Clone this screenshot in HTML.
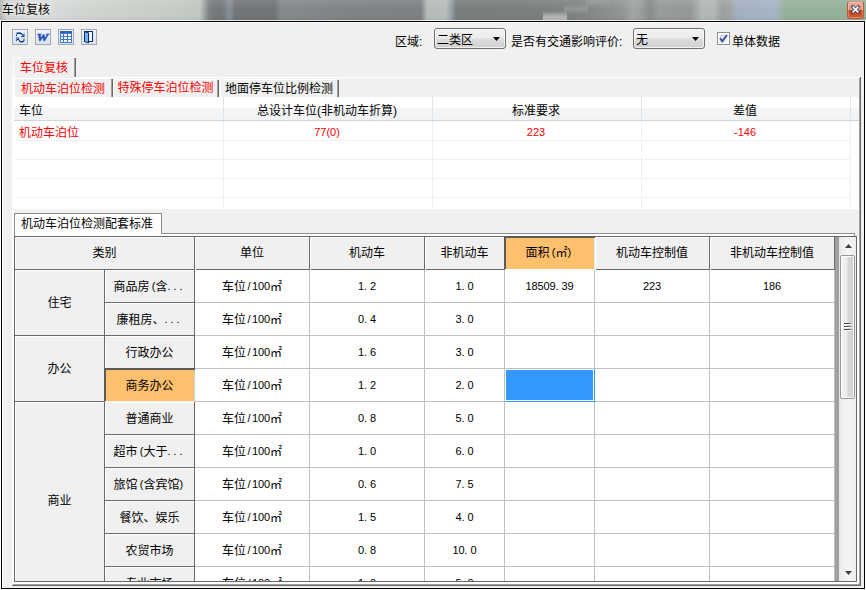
<!DOCTYPE html>
<html lang="zh-CN"><head><meta charset="utf-8"><title>车位复核</title>
<style>
html,body{margin:0;padding:0}
body{width:866px;height:590px;overflow:hidden;position:relative;background:#f0f0f0;
 font-family:"Liberation Sans","Noto Sans CJK SC",sans-serif;font-size:12px;color:#000}
body div{position:absolute;box-sizing:border-box}
body svg{position:absolute;overflow:visible}
.t{white-space:nowrap;overflow:hidden}
.c{text-align:center}
.r{color:#ff0000}
.m{font-family:"Liberation Sans","Noto Sans CJK SC",sans-serif;font-size:11px;letter-spacing:-.12px;position:relative;top:-1px}
.m i{display:inline-block;width:6px;font-style:normal;letter-spacing:0;text-align:left}
.m i.rt{text-align:right}
.m i.ct{text-align:center}
.n{font-size:11px}
</style></head><body>

<div style="left:0;top:0;width:866px;height:21px;background:
linear-gradient(to bottom,rgba(255,255,255,.10) 0,rgba(255,255,255,0) 9px,rgba(0,0,0,0) 15px,rgba(0,0,0,.04) 19px),
linear-gradient(to right,#b4b6b4 0,#d2d4d2 7px,#dcdedc 40px,#d3d7d3 75px,#c9cec9 150px,#c1c8c2 200px,#7e8284 209px,#747879 214px,#74787a 222px,#8a9098 230px,#727678 235px,#717577 275px,#858a8c 281px,#808486 340px,#7e8183 421px,#b6bcb8 427px,#b8beba 446px,#98a2ac 451px,#7a7d7e 456px,#7c7f80 535px,#808384 575px,#8c908e 610px,#9a9e9c 640px,#949896 690px,#b2b8b4 702px,#b2b8b4 714px,#9ca09e 722px,#9ea4a4 730px,#a4b1c3 737px,#a6b4c6 776px,#97b29b 784px,#96b19a 866px)"></div>
<div style="left:0px;top:20px;width:866px;height:1px;background:rgba(255,255,255,.82);"></div>
<div style="left:543px;top:11px;width:24px;height:9px;background:linear-gradient(to bottom,rgba(176,180,176,0),rgba(182,186,182,.9) 60%);"></div>
<div style="left:564px;top:4px;width:24px;height:10px;background:linear-gradient(to bottom,rgba(170,174,170,0),rgba(170,174,170,.5) 50%,rgba(170,174,170,0));"></div>
<div style="left:586px;top:0px;width:24px;height:8px;background:linear-gradient(to bottom,rgba(165,169,166,.45),rgba(165,169,166,0));"></div>
<div style="left:624px;top:0px;width:18px;height:20px;background:linear-gradient(to right,rgba(175,179,176,0),rgba(175,179,176,.45) 50%,rgba(175,179,176,0));"></div>
<div style="left:641px;top:0px;width:18px;height:20px;background:linear-gradient(to right,rgba(110,114,114,0),rgba(110,114,114,.4) 50%,rgba(110,114,114,0));"></div>
<div class="t " style="left:2px;top:2px;width:120px;height:17px;line-height:17px;font-size:12px;text-shadow:0 0 6px rgba(255,255,255,.9),0 0 3px rgba(255,255,255,.8)">车位复核</div>
<div style="left:847px;top:1px;width:17px;height:18px;border-radius:3px;border:1px solid #b5563f;border-top-color:#d9917f;
background:linear-gradient(to bottom,#ecab98 0,#e39682 47%,#c6411d 53%,#d25a30 100%);box-shadow:inset 0 0 0 1px rgba(255,255,255,.3)"></div>
<svg style="left:852px;top:6px" width="7" height="7" viewBox="0 0 7 7"><path d="M.9 .9 L6.1 6.1 M6.1 .9 L.9 6.1" stroke="#3d4a63" stroke-width="3.2" stroke-linecap="square"/><path d="M1.2 1.2 L5.8 5.8 M5.8 1.2 L1.2 5.8" stroke="#fff" stroke-width="1.7" stroke-linecap="square"/></svg>

<div style="left:0px;top:21px;width:1px;height:569px;background:#fff;"></div>
<div style="left:865px;top:21px;width:1px;height:569px;background:#fff;"></div>
<div style="left:0px;top:589px;width:866px;height:1px;background:#fff;"></div>
<div style="left:1px;top:21px;width:864px;height:1px;background:#000;"></div>
<div style="left:1px;top:588px;width:864px;height:1px;background:#000;"></div>
<div style="left:1px;top:21px;width:1px;height:568px;background:#000;"></div>
<div style="left:864px;top:21px;width:1px;height:568px;background:#000;"></div>
<div style="left:2px;top:22px;width:1px;height:566px;background:#fff;"></div>
<div style="left:2px;top:22px;width:862px;height:1px;background:#fff;"></div>
<div style="left:12px;top:29px;width:16px;height:16px;border:1px solid #a8a8a8;background:linear-gradient(to bottom,#eef4fc,#d6e4f6)"></div>
<div style="left:35px;top:29px;width:16px;height:16px;border:1px solid #a8a8a8;background:linear-gradient(to bottom,#eef4fc,#d6e4f6)"></div>
<div style="left:58px;top:29px;width:16px;height:16px;border:1px solid #a8a8a8;background:linear-gradient(to bottom,#eef4fc,#d6e4f6)"></div>
<div style="left:81px;top:29px;width:16px;height:16px;border:1px solid #a8a8a8;background:linear-gradient(to bottom,#eef4fc,#d6e4f6)"></div>
<svg style="left:12px;top:29px" width="16" height="16" viewBox="0 0 16 16" fill="none">
<path d="M4.5 6.2 L4.5 4.9 Q4.5 3.6 5.8 3.6 L9 3.6" stroke="#5c8eea" stroke-width="1.2"/>
<path d="M5 4.5 L9.2 4.5 L11.3 6.4" stroke="#122a60" stroke-width="1.1"/>
<path d="M4 6 h1 v1 h-1 z" fill="#122a60"/>
<path d="M12.6 3.8 L12.6 7.2 L9.6 7.2 Z" fill="#4a80e4"/>
<path d="M9.3 6.9 h3.3 v1 h-3.3 z" fill="#0f2350"/>
<path d="M11.6 11.4 Q11.4 13.3 10.2 13.3 L8 13.3" stroke="#5c8eea" stroke-width="1"/>
<path d="M12 9 L12 10.6" stroke="#5c8eea" stroke-width="1.1"/>
<path d="M12 10.4 L12 11.3 Q12 12.5 10.8 12.5 L8 12.5 L6.3 10" stroke="#122a60" stroke-width="1.1"/>
<path d="M3.9 8.3 L7 8.3 L3.9 11.8 Z" fill="#4a80e4"/>
<path d="M4.2 11.8 L6.8 9.2" stroke="#122a60" stroke-width="1"/>
</svg>
<svg style="left:35px;top:29px" width="16" height="16" viewBox="0 0 16 16">
<text x="1.5" y="11.6" textLength="11.8" lengthAdjust="spacingAndGlyphs" font-family="Liberation Serif,serif" font-weight="bold" font-style="italic" font-size="10.6" fill="#2450b8" stroke="#2450b8" stroke-width=".5">W</text></svg>
<svg style="left:58px;top:29px" width="16" height="16" viewBox="0 0 16 16">
<rect x="2" y="2" width="12" height="12" fill="#3b78d8"/><rect x="2" y="2" width="12" height="2" fill="#2f63bf"/>
<g fill="#fff"><rect x="3" y="5" width="2" height="2"/><rect x="6" y="5" width="3" height="2" fill="#fff6e0"/><rect x="10" y="5" width="3" height="2"/>
<rect x="3" y="8" width="2" height="2"/><rect x="6" y="8" width="3" height="2" fill="#fff6e0"/><rect x="10" y="8" width="3" height="2"/>
<rect x="3" y="11" width="2" height="2"/><rect x="6" y="11" width="3" height="2" fill="#fff6e0"/><rect x="10" y="11" width="3" height="2"/></g></svg>
<svg style="left:81px;top:29px" width="16" height="16" viewBox="0 0 16 16">
<rect x="3.5" y="2.5" width="8" height="10" fill="#f4f8ff" stroke="#0e2a5e" stroke-width="1"/>
<path d="M3.5 2.5 L7.5 3.8 L7.5 14 L3.5 12.5 Z" fill="#6fb4f4" stroke="#0e2a5e" stroke-width="1" stroke-linejoin="round"/></svg>
<div class="t " style="left:395px;top:34px;width:40px;height:17px;line-height:17px;">区域:</div>
<div class="t " style="left:511px;top:34px;width:120px;height:17px;line-height:17px;">是否有交通影响评价:</div>
<div style="left:434px;top:28px;width:72px;height:21px;border:1px solid #707070;border-radius:3px;background:linear-gradient(to bottom,#f2f2f2 0,#ebebeb 48%,#dddddd 52%,#cfcfcf 100%);box-shadow:inset 0 0 0 1px rgba(255,255,255,.7)"></div>
<div class="t " style="left:437px;top:32px;width:50px;height:17px;line-height:17px;">二类区</div>
<svg style="left:493px;top:37px" width="8" height="4" viewBox="0 0 8 4"><path d="M0 0 L7 0 L3.5 4 Z" fill="#000"/></svg>
<div style="left:633px;top:28px;width:72px;height:21px;border:1px solid #707070;border-radius:3px;background:linear-gradient(to bottom,#f2f2f2 0,#ebebeb 48%,#dddddd 52%,#cfcfcf 100%);box-shadow:inset 0 0 0 1px rgba(255,255,255,.7)"></div>
<div class="t " style="left:636px;top:32px;width:50px;height:17px;line-height:17px;">无</div>
<svg style="left:692px;top:37px" width="8" height="4" viewBox="0 0 8 4"><path d="M0 0 L7 0 L3.5 4 Z" fill="#000"/></svg>
<div style="left:717px;top:32px;width:13px;height:13px;border:1px solid #8e8f8f;background:#f4f4f4;box-shadow:inset 0 0 0 1px #fff"></div>
<div style="left:720px;top:35px;width:7px;height:7px;background:linear-gradient(135deg,#d4d6da,#f4f4f6)"></div>
<svg style="left:717px;top:32px" width="13" height="13" viewBox="0 0 13 13"><path d="M3 6.2 L5.3 9.3 L10 3" fill="none" stroke="#3a4f9a" stroke-width="1.9"/></svg>
<div class="t " style="left:732px;top:34px;width:60px;height:17px;line-height:17px;">单体数据</div>
<div style="left:12px;top:77px;width:849px;height:1px;background:#fff;"></div>
<div style="left:12px;top:77px;width:1px;height:508px;background:#fff;"></div>
<div style="left:13px;top:77px;width:1px;height:507px;background:#fff;"></div>
<div style="left:859px;top:78px;width:1px;height:507px;background:#a0a0a0;"></div>
<div style="left:860px;top:77px;width:1px;height:509px;background:#696969;"></div>
<div style="left:13px;top:584px;width:847px;height:1px;background:#a0a0a0;"></div>
<div style="left:12px;top:585px;width:849px;height:1px;background:#696969;"></div>
<div style="left:13px;top:58px;width:1px;height:20px;background:#fff;"></div>
<div style="left:14px;top:57px;width:60px;height:1px;background:#fff;"></div>
<div style="left:74px;top:58px;width:1px;height:19px;background:#a0a0a0;"></div>
<div style="left:75px;top:58px;width:1px;height:19px;background:#696969;"></div>
<div style="left:14px;top:58px;width:60px;height:20px;background:#f0f0f0;"></div>
<div class="t c r" style="left:14px;top:60px;width:60px;height:17px;line-height:17px;">车位复核</div>
<div style="left:15px;top:78px;width:96px;height:1px;background:#fff;"></div>
<div style="left:14px;top:79px;width:1px;height:18px;background:#fff;"></div>
<div style="left:111px;top:79px;width:1px;height:18px;background:#a0a0a0;"></div>
<div style="left:112px;top:79px;width:1px;height:18px;background:#696969;"></div>
<div class="t c r" style="left:15px;top:81px;width:96px;height:17px;line-height:17px;">机动车泊位检测</div>
<div style="left:114px;top:79px;width:103px;height:1px;background:#fff;"></div>
<div style="left:113px;top:80px;width:1px;height:17px;background:#fff;"></div>
<div style="left:217px;top:80px;width:1px;height:17px;background:#a0a0a0;"></div>
<div style="left:218px;top:80px;width:1px;height:17px;background:#696969;"></div>
<div class="t c r" style="left:114px;top:80px;width:103px;height:17px;line-height:17px;">特殊停车泊位检测</div>
<div style="left:221px;top:79px;width:116px;height:1px;background:#fff;"></div>
<div style="left:220px;top:80px;width:1px;height:17px;background:#fff;"></div>
<div style="left:337px;top:80px;width:1px;height:17px;background:#a0a0a0;"></div>
<div style="left:338px;top:80px;width:1px;height:17px;background:#696969;"></div>
<div class="t c " style="left:221px;top:81px;width:116px;height:17px;line-height:17px;">地面停车位比例检测</div>
<div style="left:14px;top:97px;width:845px;height:112px;background:#fff;"></div>
<div style="left:14px;top:97px;width:845px;height:23px;background:linear-gradient(to bottom,#fff 0,#fff 45%,#f5f6f8 50%,#f1f2f4 100%);"></div>
<div style="left:14px;top:120px;width:845px;height:1px;background:#d5d5d5;"></div>
<div style="left:223px;top:97px;width:1px;height:23px;background:#e0e3e8;"></div>
<div style="left:223px;top:121px;width:1px;height:88px;background:#f0f0f0;"></div>
<div style="left:432px;top:97px;width:1px;height:23px;background:#e0e3e8;"></div>
<div style="left:432px;top:121px;width:1px;height:88px;background:#f0f0f0;"></div>
<div style="left:641px;top:97px;width:1px;height:23px;background:#e0e3e8;"></div>
<div style="left:641px;top:121px;width:1px;height:88px;background:#f0f0f0;"></div>
<div style="left:850px;top:97px;width:1px;height:23px;background:#e0e3e8;"></div>
<div style="left:850px;top:121px;width:1px;height:88px;background:#f0f0f0;"></div>
<div style="left:14px;top:140px;width:837px;height:1px;background:#f0f0f0;"></div>
<div style="left:14px;top:159px;width:837px;height:1px;background:#f0f0f0;"></div>
<div style="left:14px;top:178px;width:837px;height:1px;background:#f0f0f0;"></div>
<div style="left:14px;top:197px;width:837px;height:1px;background:#f0f0f0;"></div>
<div class="t " style="left:19px;top:103px;width:190px;height:17px;line-height:17px;">车位</div>
<div class="t r" style="left:19px;top:124px;width:190px;height:18px;line-height:18px;">机动车泊位</div>
<div class="t c" style="left:223px;top:103px;width:208px;height:17px;line-height:17px;">总设计车位(非机动车折算)</div>
<div class="t c r n" style="left:223px;top:123px;width:208px;height:18px;line-height:18px;">77(0)</div>
<div class="t c" style="left:432px;top:103px;width:208px;height:17px;line-height:17px;">标准要求</div>
<div class="t c r n" style="left:432px;top:123px;width:208px;height:18px;line-height:18px;">223</div>
<div class="t c" style="left:641px;top:103px;width:208px;height:17px;line-height:17px;">差值</div>
<div class="t c r n" style="left:641px;top:123px;width:208px;height:18px;line-height:18px;">-146</div>
<div style="left:14px;top:236px;width:845px;height:348px;background:#fff;"></div>
<div style="left:15px;top:234px;width:839px;height:2px;background:#fff;"></div>
<div style="left:854px;top:233px;width:1px;height:3px;background:#898c95;"></div>
<div style="left:14px;top:233px;width:1px;height:4px;background:#898c95;"></div>
<div style="left:14px;top:233px;width:841px;height:1px;background:#898c95;"></div>
<div style="left:14px;top:213px;width:148px;height:21px;background:#fff;border:1px solid #898c95;border-bottom:none"></div>
<div class="t " style="left:21px;top:216px;width:138px;height:17px;line-height:17px;">机动车泊位检测配套标准</div>
<div style="left:14px;top:236px;width:843px;height:346px;background:#fff;border:1px solid #696969"></div>
<div style="left:15px;top:237px;width:179px;height:344px;background:#f0f0f0;"></div>
<div style="left:195px;top:237px;width:639px;height:32px;background:#f0f0f0;"></div>
<div style="left:835px;top:237px;width:4px;height:344px;background:#a0a0a0;"></div>
<div style="left:15px;top:237px;width:819px;height:1px;background:#fff;"></div>
<div style="left:15px;top:237px;width:1px;height:32px;background:#fff;"></div>
<div style="left:195px;top:237px;width:1px;height:32px;background:#fff;"></div>
<div style="left:310px;top:237px;width:1px;height:32px;background:#fff;"></div>
<div style="left:425px;top:237px;width:1px;height:32px;background:#fff;"></div>
<div style="left:505px;top:237px;width:1px;height:32px;background:#fff;"></div>
<div style="left:595px;top:237px;width:1px;height:32px;background:#fff;"></div>
<div style="left:710px;top:237px;width:1px;height:32px;background:#fff;"></div>
<div style="left:15px;top:269px;width:820px;height:1px;background:#696969;"></div>
<div style="left:194px;top:237px;width:1px;height:32px;background:#696969;"></div>
<div style="left:309px;top:237px;width:1px;height:32px;background:#696969;"></div>
<div style="left:424px;top:237px;width:1px;height:32px;background:#696969;"></div>
<div style="left:504px;top:237px;width:1px;height:32px;background:#696969;"></div>
<div style="left:594px;top:237px;width:1px;height:32px;background:#696969;"></div>
<div style="left:709px;top:237px;width:1px;height:32px;background:#696969;"></div>
<div style="left:834px;top:237px;width:1px;height:32px;background:#696969;"></div>
<div style="left:195px;top:269px;width:1px;height:1px;background:#fff;"></div>
<div style="left:310px;top:269px;width:1px;height:1px;background:#fff;"></div>
<div style="left:425px;top:269px;width:1px;height:1px;background:#fff;"></div>
<div style="left:505px;top:269px;width:1px;height:1px;background:#fff;"></div>
<div style="left:595px;top:269px;width:1px;height:1px;background:#fff;"></div>
<div style="left:710px;top:269px;width:1px;height:1px;background:#fff;"></div>
<div style="left:195px;top:302px;width:640px;height:1px;background:#c0c0c0;"></div>
<div style="left:195px;top:335px;width:640px;height:1px;background:#c0c0c0;"></div>
<div style="left:195px;top:368px;width:640px;height:1px;background:#c0c0c0;"></div>
<div style="left:195px;top:401px;width:640px;height:1px;background:#c0c0c0;"></div>
<div style="left:195px;top:434px;width:640px;height:1px;background:#c0c0c0;"></div>
<div style="left:195px;top:467px;width:640px;height:1px;background:#c0c0c0;"></div>
<div style="left:195px;top:500px;width:640px;height:1px;background:#c0c0c0;"></div>
<div style="left:195px;top:533px;width:640px;height:1px;background:#c0c0c0;"></div>
<div style="left:195px;top:566px;width:640px;height:1px;background:#c0c0c0;"></div>
<div style="left:309px;top:270px;width:1px;height:311px;background:#c0c0c0;"></div>
<div style="left:424px;top:270px;width:1px;height:311px;background:#c0c0c0;"></div>
<div style="left:504px;top:270px;width:1px;height:311px;background:#c0c0c0;"></div>
<div style="left:594px;top:270px;width:1px;height:311px;background:#c0c0c0;"></div>
<div style="left:709px;top:270px;width:1px;height:311px;background:#c0c0c0;"></div>
<div style="left:834px;top:270px;width:1px;height:311px;background:#c0c0c0;"></div>
<div style="left:194px;top:270px;width:1px;height:311px;background:#696969;"></div>
<div style="left:104px;top:270px;width:1px;height:311px;background:#696969;"></div>
<div style="left:105px;top:302px;width:90px;height:1px;background:#696969;"></div>
<div style="left:105px;top:303px;width:89px;height:1px;background:#fff;"></div>
<div style="left:105px;top:335px;width:90px;height:1px;background:#696969;"></div>
<div style="left:105px;top:336px;width:89px;height:1px;background:#fff;"></div>
<div style="left:105px;top:368px;width:90px;height:1px;background:#696969;"></div>
<div style="left:105px;top:369px;width:89px;height:1px;background:#fff;"></div>
<div style="left:105px;top:401px;width:90px;height:1px;background:#696969;"></div>
<div style="left:105px;top:402px;width:89px;height:1px;background:#fff;"></div>
<div style="left:105px;top:434px;width:90px;height:1px;background:#696969;"></div>
<div style="left:105px;top:435px;width:89px;height:1px;background:#fff;"></div>
<div style="left:105px;top:467px;width:90px;height:1px;background:#696969;"></div>
<div style="left:105px;top:468px;width:89px;height:1px;background:#fff;"></div>
<div style="left:105px;top:500px;width:90px;height:1px;background:#696969;"></div>
<div style="left:105px;top:501px;width:89px;height:1px;background:#fff;"></div>
<div style="left:105px;top:533px;width:90px;height:1px;background:#696969;"></div>
<div style="left:105px;top:534px;width:89px;height:1px;background:#fff;"></div>
<div style="left:105px;top:566px;width:90px;height:1px;background:#696969;"></div>
<div style="left:105px;top:567px;width:89px;height:1px;background:#fff;"></div>
<div style="left:105px;top:270px;width:89px;height:1px;background:#fff;"></div>
<div style="left:15px;top:335px;width:90px;height:1px;background:#696969;"></div>
<div style="left:15px;top:401px;width:90px;height:1px;background:#696969;"></div>
<div style="left:15px;top:270px;width:89px;height:1px;background:#fff;"></div>
<div style="left:15px;top:336px;width:89px;height:1px;background:#fff;"></div>
<div style="left:15px;top:402px;width:89px;height:1px;background:#fff;"></div>
<div style="left:15px;top:270px;width:1px;height:311px;background:#fff;"></div>
<div style="left:105px;top:270px;width:1px;height:311px;background:#fff;"></div>
<div style="left:15px;top:335px;width:90px;height:1px;background:#696969;"></div>
<div style="left:15px;top:401px;width:90px;height:1px;background:#696969;"></div>
<div style="left:104px;top:302px;width:91px;height:1px;background:#696969;"></div>
<div style="left:104px;top:335px;width:91px;height:1px;background:#696969;"></div>
<div style="left:104px;top:368px;width:91px;height:1px;background:#696969;"></div>
<div style="left:104px;top:401px;width:91px;height:1px;background:#696969;"></div>
<div style="left:104px;top:434px;width:91px;height:1px;background:#696969;"></div>
<div style="left:104px;top:467px;width:91px;height:1px;background:#696969;"></div>
<div style="left:104px;top:500px;width:91px;height:1px;background:#696969;"></div>
<div style="left:104px;top:533px;width:91px;height:1px;background:#696969;"></div>
<div style="left:104px;top:566px;width:91px;height:1px;background:#696969;"></div>
<div style="left:504px;top:236px;width:2px;height:33px;background:#5a5a5a;"></div>
<div style="left:504px;top:236px;width:91px;height:2px;background:#5a5a5a;"></div>
<div style="left:506px;top:238px;width:88px;height:31px;background:#ffc06e;"></div>
<div style="left:594px;top:238px;width:1px;height:32px;background:#e8e8e8;"></div>
<div style="left:505px;top:269px;width:90px;height:1px;background:#fff;"></div>
<div class="t c" style="left:15px;top:245px;width:179px;height:17px;line-height:17px;">类别</div>
<div class="t c" style="left:195px;top:245px;width:114px;height:17px;line-height:17px;">单位</div>
<div class="t c" style="left:310px;top:245px;width:114px;height:17px;line-height:17px;">机动车</div>
<div class="t c" style="left:425px;top:245px;width:79px;height:17px;line-height:17px;">非机动车</div>
<div class="t c" style="left:505px;top:245px;width:89px;height:17px;line-height:17px;">面积<span class="m"><i class="rt">(</i></span>㎡<span class="m"><i>)</i></span></div>
<div class="t c" style="left:595px;top:245px;width:114px;height:17px;line-height:17px;">机动车控制值</div>
<div class="t c" style="left:710px;top:245px;width:124px;height:17px;line-height:17px;">非机动车控制值</div>
<div style="left:104px;top:368px;width:2px;height:33px;background:#5a5a5a;"></div>
<div style="left:104px;top:368px;width:91px;height:2px;background:#5a5a5a;"></div>
<div style="left:106px;top:370px;width:88px;height:31px;background:#ffc06e;"></div>
<div style="left:105px;top:401px;width:89px;height:1px;background:#f4f4f4;"></div>
<div style="left:194px;top:370px;width:1px;height:32px;background:#d0d0d0;"></div>
<div style="left:505px;top:369px;width:90px;height:33px;background:#3399ff;"></div>
<div style="left:505px;top:369px;width:89px;height:32px;background:#fff;"></div>
<div style="left:506px;top:370px;width:87px;height:30px;background:#3399ff;"></div>
<div class="t c" style="left:105px;top:279px;width:89px;height:17px;line-height:17px;">商品房<span class="m"><i class="rt">(</i></span>含<span class="m"><i>.</i><i>.</i><i>.</i></span></div>
<div class="t c" style="left:195px;top:279px;width:114px;height:17px;line-height:17px;">车位<span class="m"><i class="ct">/</i>100</span>㎡</div>
<div class="t c" style="left:310px;top:279px;width:114px;height:17px;line-height:17px;"><span class="m">1<i>.</i>2</span></div>
<div class="t c" style="left:425px;top:279px;width:79px;height:17px;line-height:17px;"><span class="m">1<i>.</i>0</span></div>
<div class="t c" style="left:505px;top:279px;width:89px;height:17px;line-height:17px;"><span class="m">18509<i>.</i>39</span></div>
<div class="t c" style="left:595px;top:279px;width:114px;height:17px;line-height:17px;"><span class="m">223</span></div>
<div class="t c" style="left:710px;top:279px;width:124px;height:17px;line-height:17px;"><span class="m">186</span></div>
<div class="t c" style="left:105px;top:312px;width:89px;height:17px;line-height:17px;">廉租房、<span class="m"><i>.</i><i>.</i><i>.</i></span></div>
<div class="t c" style="left:195px;top:312px;width:114px;height:17px;line-height:17px;">车位<span class="m"><i class="ct">/</i>100</span>㎡</div>
<div class="t c" style="left:310px;top:312px;width:114px;height:17px;line-height:17px;"><span class="m">0<i>.</i>4</span></div>
<div class="t c" style="left:425px;top:312px;width:79px;height:17px;line-height:17px;"><span class="m">3<i>.</i>0</span></div>
<div class="t c" style="left:105px;top:345px;width:89px;height:17px;line-height:17px;">行政办公</div>
<div class="t c" style="left:195px;top:345px;width:114px;height:17px;line-height:17px;">车位<span class="m"><i class="ct">/</i>100</span>㎡</div>
<div class="t c" style="left:310px;top:345px;width:114px;height:17px;line-height:17px;"><span class="m">1<i>.</i>6</span></div>
<div class="t c" style="left:425px;top:345px;width:79px;height:17px;line-height:17px;"><span class="m">3<i>.</i>0</span></div>
<div class="t c" style="left:105px;top:378px;width:89px;height:17px;line-height:17px;">商务办公</div>
<div class="t c" style="left:195px;top:378px;width:114px;height:17px;line-height:17px;">车位<span class="m"><i class="ct">/</i>100</span>㎡</div>
<div class="t c" style="left:310px;top:378px;width:114px;height:17px;line-height:17px;"><span class="m">1<i>.</i>2</span></div>
<div class="t c" style="left:425px;top:378px;width:79px;height:17px;line-height:17px;"><span class="m">2<i>.</i>0</span></div>
<div class="t c" style="left:105px;top:411px;width:89px;height:17px;line-height:17px;">普通商业</div>
<div class="t c" style="left:195px;top:411px;width:114px;height:17px;line-height:17px;">车位<span class="m"><i class="ct">/</i>100</span>㎡</div>
<div class="t c" style="left:310px;top:411px;width:114px;height:17px;line-height:17px;"><span class="m">0<i>.</i>8</span></div>
<div class="t c" style="left:425px;top:411px;width:79px;height:17px;line-height:17px;"><span class="m">5<i>.</i>0</span></div>
<div class="t c" style="left:105px;top:444px;width:89px;height:17px;line-height:17px;">超市<span class="m"><i class="rt">(</i></span>大于<span class="m"><i>.</i><i>.</i><i>.</i></span></div>
<div class="t c" style="left:195px;top:444px;width:114px;height:17px;line-height:17px;">车位<span class="m"><i class="ct">/</i>100</span>㎡</div>
<div class="t c" style="left:310px;top:444px;width:114px;height:17px;line-height:17px;"><span class="m">1<i>.</i>0</span></div>
<div class="t c" style="left:425px;top:444px;width:79px;height:17px;line-height:17px;"><span class="m">6<i>.</i>0</span></div>
<div class="t c" style="left:105px;top:477px;width:89px;height:17px;line-height:17px;">旅馆<span class="m"><i class="rt">(</i></span>含宾馆<span class="m"><i>)</i></span></div>
<div class="t c" style="left:195px;top:477px;width:114px;height:17px;line-height:17px;">车位<span class="m"><i class="ct">/</i>100</span>㎡</div>
<div class="t c" style="left:310px;top:477px;width:114px;height:17px;line-height:17px;"><span class="m">0<i>.</i>6</span></div>
<div class="t c" style="left:425px;top:477px;width:79px;height:17px;line-height:17px;"><span class="m">7<i>.</i>5</span></div>
<div class="t c" style="left:105px;top:510px;width:89px;height:17px;line-height:17px;">餐饮、娱乐</div>
<div class="t c" style="left:195px;top:510px;width:114px;height:17px;line-height:17px;">车位<span class="m"><i class="ct">/</i>100</span>㎡</div>
<div class="t c" style="left:310px;top:510px;width:114px;height:17px;line-height:17px;"><span class="m">1<i>.</i>5</span></div>
<div class="t c" style="left:425px;top:510px;width:79px;height:17px;line-height:17px;"><span class="m">4<i>.</i>0</span></div>
<div class="t c" style="left:105px;top:543px;width:89px;height:17px;line-height:17px;">农贸市场</div>
<div class="t c" style="left:195px;top:543px;width:114px;height:17px;line-height:17px;">车位<span class="m"><i class="ct">/</i>100</span>㎡</div>
<div class="t c" style="left:310px;top:543px;width:114px;height:17px;line-height:17px;"><span class="m">0<i>.</i>8</span></div>
<div class="t c" style="left:425px;top:543px;width:79px;height:17px;line-height:17px;"><span class="m">10<i>.</i>0</span></div>
<div class="t c" style="left:105px;top:576px;width:89px;height:5px;line-height:5px;line-height:17px;">专业市场</div>
<div class="t c" style="left:195px;top:576px;width:114px;height:5px;line-height:5px;line-height:17px;">车位<span class="m"><i class="ct">/</i>100</span>㎡</div>
<div class="t c" style="left:310px;top:576px;width:114px;height:5px;line-height:5px;line-height:17px;"><span class="m">1<i>.</i>0</span></div>
<div class="t c" style="left:425px;top:576px;width:79px;height:5px;line-height:5px;line-height:17px;"><span class="m">5<i>.</i>0</span></div>
<div class="t c" style="left:15px;top:295px;width:89px;height:17px;line-height:17px;">住宅</div>
<div class="t c" style="left:15px;top:361px;width:89px;height:17px;line-height:17px;">办公</div>
<div class="t c" style="left:15px;top:493px;width:89px;height:17px;line-height:17px;">商业</div>
<div style="left:839px;top:237px;width:17px;height:344px;background:linear-gradient(to right,#e6e6e6 0,#f0f0f0 25%,#f4f4f4 60%,#eeeeee 100%);"></div>
<svg style="left:845px;top:244px" width="7" height="4" viewBox="0 0 7 4"><path d="M0 4 L3.5 0 L7 4 Z" fill="#404040"/></svg>
<svg style="left:845px;top:571px" width="7" height="4" viewBox="0 0 7 4"><path d="M0 0 L7 0 L3.5 4 Z" fill="#404040"/></svg>
<div style="left:840px;top:255px;width:15px;height:144px;border:1px solid #979797;border-radius:2px;background:linear-gradient(to right,#f4f4f4 0,#ececec 45%,#d8d8d8 55%,#cfcfcf 100%);box-shadow:inset 0 0 0 1px rgba(255,255,255,.8)"></div>
<div style="left:844px;top:323px;width:7px;height:1px;background:linear-gradient(to right,#303030,#707070);"></div>
<div style="left:844px;top:324px;width:7px;height:1px;background:#fff;"></div>
<div style="left:844px;top:326px;width:7px;height:1px;background:linear-gradient(to right,#303030,#707070);"></div>
<div style="left:844px;top:327px;width:7px;height:1px;background:#fff;"></div>
<div style="left:844px;top:329px;width:7px;height:1px;background:linear-gradient(to right,#303030,#707070);"></div>
<div style="left:844px;top:330px;width:7px;height:1px;background:#fff;"></div>
</body></html>
